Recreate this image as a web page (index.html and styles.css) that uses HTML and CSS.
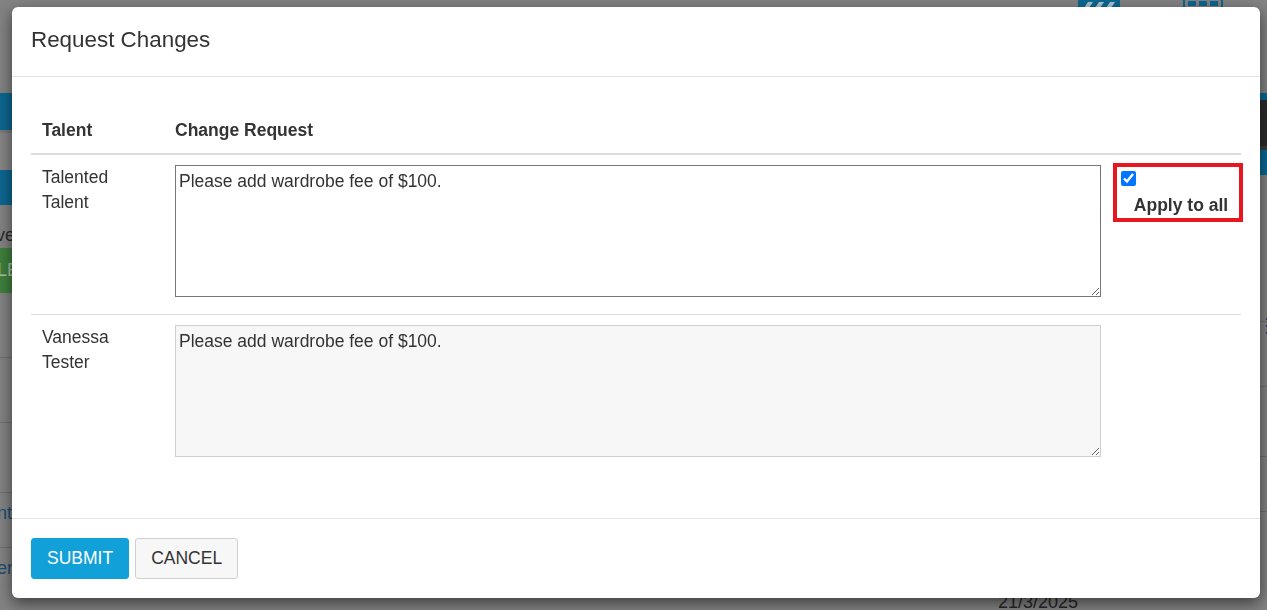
FILE: index.html
```html
<!DOCTYPE html>
<html lang="en">
<head>
<meta charset="utf-8">
<title>Request Changes</title>
<link rel="stylesheet" href="styles.css">
</head>
<body>
<div class="page">
  <div class="page-left">
    <div class="band band-top"></div>
    <div class="band band-blue h37"></div>
    <div class="band band-sub h40"></div>
    <div class="band band-blue h35"></div>
    <div class="band h20"></div>
    <div class="band band-text">ve</div>
    <div class="band band-green">LE</div>
    <div class="band h65 line"></div>
    <div class="band h65 line"></div>
    <div class="band h70 line"></div>
    <div class="band band-link h55 line">nt</div>
    <div class="band band-link h55">er</div>
  </div>
  <div class="page-right">
    <div class="band band-top toolbar">
      <svg class="tool tool-list" width="42" height="9" viewBox="0 0 42 9">
        <rect width="42" height="9" fill="#0c6791"/>
        <path d="M6 8 L10 2 H15 L11 8 Z M17 8 L21 2 H26 L22 8 Z M28 8 L32 2 H37 L33 8 Z" fill="#a9c3d2"/>
      </svg>
      <svg class="tool tool-grid" width="40" height="9" viewBox="0 0 40 9">
        <rect x="1" y="-2" width="38" height="10" fill="none" stroke="#0c6791" stroke-width="2"/>
        <rect x="5" y="1" width="8" height="5" fill="#0c6791"/>
        <rect x="16" y="1" width="8" height="5" fill="#0c6791"/>
        <rect x="27" y="1" width="8" height="5" fill="#0c6791"/>
      </svg>
    </div>
    <div class="band band-blue h7"></div>
    <div class="band band-dark"></div>
    <div class="band band-blue h25"></div>
    <div class="band band-dots">&#8942;</div>
    <div class="band h65 line"></div>
    <div class="band h70 line"></div>
    <div class="band h55 line"></div>
    <div class="band band-date">21/3/2025</div>
  </div>
</div>

<div class="modal" role="dialog" aria-labelledby="modal-title">
  <div class="modal-header">
    <h4 class="modal-title" id="modal-title">Request Changes</h4>
  </div>
  <div class="modal-body">
    <table class="changes">
      <colgroup>
        <col class="col-talent">
        <col class="col-request">
        <col class="col-apply">
      </colgroup>
      <thead>
        <tr>
          <th>Talent</th>
          <th>Change Request</th>
          <th></th>
        </tr>
      </thead>
      <tbody>
        <tr>
          <td>Talented Talent</td>
          <td><textarea class="request">Please add wardrobe fee of $100.</textarea></td>
          <td class="apply-cell">
            <label class="apply-box">
              <input type="checkbox" checked>
              <span class="apply-label">Apply to all</span>
            </label>
          </td>
        </tr>
        <tr>
          <td>Vanessa Tester</td>
          <td><textarea class="request request-locked" readonly>Please add wardrobe fee of $100.</textarea></td>
          <td></td>
        </tr>
      </tbody>
    </table>
  </div>
  <div class="modal-footer">
    <button class="btn btn-primary" type="button">Submit</button>
    <button class="btn btn-default" type="button">Cancel</button>
  </div>
</div>
</body>
</html>
```
FILE: styles.css
```css
html, body {
  margin: 0;
  padding: 0;
}

body {
  width: 1267px;
  height: 610px;
  overflow: hidden;
  background: #838383;
  font-family: "Liberation Sans", Arial, sans-serif;
}

/* dimmed page behind the dialog */
.page {
  display: grid;
  grid-template-columns: 640px 1fr;
  height: 610px;
  background: #838383;
}

.band {
  box-sizing: border-box;
}

.band-top { height: 93px; }
.h7 { height: 7px; }
.h20 { height: 20px; }
.h25 { height: 25px; }
.h35 { height: 35px; }
.h37 { height: 37px; }
.h40 { height: 40px; }
.h55 { height: 55px; }
.h65 { height: 65px; }
.h70 { height: 70px; }

.line { border-bottom: 1px solid #6f6f6f; }

.band-blue { background: #0c6791; }
.band-sub { background: #858585; border-top: 3px solid #7a7a7a; }
.band-dark { height: 50px; background: #2a2b2d; border-bottom: 4px solid #3a3b3e; }
.band-green {
  height: 45px;
  margin-top: 3px;
  background: #3f7f3c;
  color: #a8c4a6;
  font-size: 18px;
  line-height: 45px;
  text-indent: -3px;
}
.band-text {
  height: 20px;
  color: #2b2b2b;
  font-size: 18px;
  line-height: 20px;
  text-indent: -4px;
}
.band-link {
  color: #204e73;
  font-size: 18px;
  line-height: 40px;
  text-indent: -3px;
}
.band-dots {
  height: 147px;
  padding: 140px 0 0 617px;
  color: #1d3e5c;
  font-size: 20px;
  line-height: 20px;
  border-bottom: 1px solid #6f6f6f;
}
.band-date {
  padding-left: 358px;
  padding-top: 80px;
  color: #262626;
  font-size: 18px;
  line-height: 21px;
}

.toolbar {
  display: flex;
  align-items: flex-start;
  padding-left: 438px;
  gap: 63px;
}
.tool { display: block; }

/* dialog */
.modal {
  position: fixed;
  top: 7px;
  left: 12px;
  width: 1248px;
  background: #fff;
  border-radius: 6px;
  box-shadow: 0 5px 15px rgba(0, 0, 0, 0.55);
  color: #333;
  font-family: "Liberation Sans", Arial, sans-serif;
}

.modal-header {
  padding: 18px 19px 21px;
  border-bottom: 1px solid #e5e5e5;
}

.modal-title {
  margin: 0;
  font-size: 22.4px;
  line-height: 30px;
  font-weight: normal;
  color: #333;
}

.modal-body {
  padding: 31px 19px 44px;
}

.changes {
  width: 1210px;
  table-layout: fixed;
  border-collapse: separate;
  border-spacing: 0;
  font-size: 17.5px;
  line-height: 25px;
}

.col-talent { width: 134px; }
.col-request { width: 946px; }
.col-apply { width: 130px; }

.changes th {
  text-align: left;
  font-weight: bold;
  padding: 10px 10px 10px 11px;
  border-bottom: 2px solid #ddd;
}

.changes th + th {
  padding-left: 10px;
}

.changes td {
  padding: 10px 10px 17px;
  vertical-align: top;
}

.changes td:first-child {
  padding-left: 11px;
  padding-right: 9px;
}

.changes tbody tr + tr td {
  border-top: 1px solid #ddd;
}

.changes td.apply-cell {
  padding: 8px 0 0 2px;
}

.request {
  display: block;
  box-sizing: border-box;
  width: 100%;
  height: 132px;
  margin: 0;
  padding: 3px;
  border: 1px solid #767676;
  border-radius: 0;
  font-family: "Liberation Sans", Arial, sans-serif;
  font-size: 17.5px;
  line-height: 24px;
  color: #333;
  background: #fff;
  resize: vertical;
  outline: none;
}

.request-locked {
  background: #f7f7f7;
  border-color: #cfcfcf;
}

.apply-box {
  display: block;
  box-sizing: border-box;
  width: 130px;
  height: 59px;
  padding: 4px 0 0 4px;
  border: 4px solid #e8161e;
}

.apply-box input {
  display: block;
  width: 15px;
  height: 15px;
  margin: 0;
  accent-color: #0075ff;
}

.apply-label {
  display: block;
  margin-top: 8px;
  line-height: 23px;
  font-weight: bold;
  text-align: center;
  padding-left: 2px;
}

.modal-footer {
  display: flex;
  gap: 6px;
  padding: 19px;
  border-top: 1px solid #e5e5e5;
}

.btn {
  font-family: "Liberation Sans", Arial, sans-serif;
  font-size: 17.5px;
  line-height: 25px;
  padding: 7px 15px;
  border: 1px solid;
  border-radius: 3px;
  text-transform: uppercase;
  cursor: pointer;
}

.btn-primary {
  background: #12a0d8;
  border-color: #12a0d8;
  color: #fff;
}

.btn-default {
  background: #f7f7f7;
  border-color: #cfcfcf;
  color: #333;
}
```
